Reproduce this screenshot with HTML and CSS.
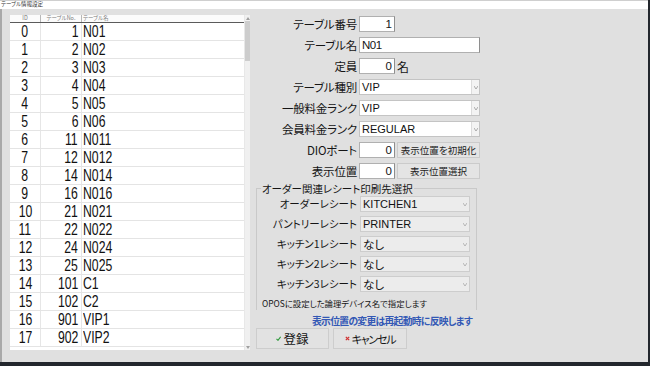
FILE: index.html
```html
<!DOCTYPE html>
<html lang="ja">
<head>
<meta charset="utf-8">
<link rel="stylesheet" href="styles.css">
</head>
<body>
<div class="window">
  <div class="titlebar">テーブル情報設定</div>
  <div class="main">
    <div class="grid">
      <div class="grid-body">
        <div class="row head"><div class="c id">ID</div><div class="c no">テーブルNo.</div><div class="c nm">テーブル名</div></div>
        <div class="row"><div class="c id"><span class="t">0</span></div><div class="c no"><span class="t">1</span></div><div class="c nm"><span class="t">N01</span></div></div>
        <div class="row"><div class="c id"><span class="t">1</span></div><div class="c no"><span class="t">2</span></div><div class="c nm"><span class="t">N02</span></div></div>
        <div class="row"><div class="c id"><span class="t">2</span></div><div class="c no"><span class="t">3</span></div><div class="c nm"><span class="t">N03</span></div></div>
        <div class="row"><div class="c id"><span class="t">3</span></div><div class="c no"><span class="t">4</span></div><div class="c nm"><span class="t">N04</span></div></div>
        <div class="row"><div class="c id"><span class="t">4</span></div><div class="c no"><span class="t">5</span></div><div class="c nm"><span class="t">N05</span></div></div>
        <div class="row"><div class="c id"><span class="t">5</span></div><div class="c no"><span class="t">6</span></div><div class="c nm"><span class="t">N06</span></div></div>
        <div class="row"><div class="c id"><span class="t">6</span></div><div class="c no"><span class="t">11</span></div><div class="c nm"><span class="t">N011</span></div></div>
        <div class="row"><div class="c id"><span class="t">7</span></div><div class="c no"><span class="t">12</span></div><div class="c nm"><span class="t">N012</span></div></div>
        <div class="row"><div class="c id"><span class="t">8</span></div><div class="c no"><span class="t">14</span></div><div class="c nm"><span class="t">N014</span></div></div>
        <div class="row"><div class="c id"><span class="t">9</span></div><div class="c no"><span class="t">16</span></div><div class="c nm"><span class="t">N016</span></div></div>
        <div class="row"><div class="c id"><span class="t">10</span></div><div class="c no"><span class="t">21</span></div><div class="c nm"><span class="t">N021</span></div></div>
        <div class="row"><div class="c id"><span class="t">11</span></div><div class="c no"><span class="t">22</span></div><div class="c nm"><span class="t">N022</span></div></div>
        <div class="row"><div class="c id"><span class="t">12</span></div><div class="c no"><span class="t">24</span></div><div class="c nm"><span class="t">N024</span></div></div>
        <div class="row"><div class="c id"><span class="t">13</span></div><div class="c no"><span class="t">25</span></div><div class="c nm"><span class="t">N025</span></div></div>
        <div class="row"><div class="c id"><span class="t">14</span></div><div class="c no"><span class="t">101</span></div><div class="c nm"><span class="t">C1</span></div></div>
        <div class="row"><div class="c id"><span class="t">15</span></div><div class="c no"><span class="t">102</span></div><div class="c nm"><span class="t">C2</span></div></div>
        <div class="row"><div class="c id"><span class="t">16</span></div><div class="c no"><span class="t">901</span></div><div class="c nm"><span class="t">VIP1</span></div></div>
        <div class="row"><div class="c id"><span class="t">17</span></div><div class="c no"><span class="t">902</span></div><div class="c nm"><span class="t">VIP2</span></div></div>
      </div>
      <div class="sb">
        <div class="sb-btn"><svg width="4" height="3" viewBox="0 0 4 3"><path d="M0 3 L2 0 L4 3Z" fill="#a0a0a0"/></svg></div>
        <div class="sb-thumb"></div>
        <div class="sb-track"></div>
        <div class="sb-btn"><svg width="4" height="3" viewBox="0 0 4 3"><path d="M0 0 L2 3 L4 0Z" fill="#a0a0a0"/></svg></div>
      </div>
    </div>

    <div class="form">
      <div class="frow"><div class="lbl">テーブル番号</div><div class="tb short">1</div></div>
      <div class="frow"><div class="lbl">テーブル名</div><div class="tb long cond">N01</div></div>
      <div class="frow"><div class="lbl">定員</div><div class="tb short">0</div><span class="unit">名</span></div>
      <div class="frow"><div class="lbl">テーブル種別</div><div class="sel"><span class="val">VIP</span><span class="arr"><svg width="4" height="3" viewBox="0 0 4 3"><path d="M0 0 L2 3 L4 0" fill="none" stroke="#999" stroke-width="0.8"/></svg></span></div></div>
      <div class="frow"><div class="lbl">一般料金ランク</div><div class="sel"><span class="val">VIP</span><span class="arr"><svg width="4" height="3" viewBox="0 0 4 3"><path d="M0 0 L2 3 L4 0" fill="none" stroke="#999" stroke-width="0.8"/></svg></span></div></div>
      <div class="frow"><div class="lbl">会員料金ランク</div><div class="sel"><span class="val">REGULAR</span><span class="arr"><svg width="4" height="3" viewBox="0 0 4 3"><path d="M0 0 L2 3 L4 0" fill="none" stroke="#999" stroke-width="0.8"/></svg></span></div></div>
      <div class="frow"><div class="lbl">DIOポート</div><div class="tb short">0</div><div class="sbtn">表示位置を初期化</div></div>
      <div class="frow"><div class="lbl">表示位置</div><div class="tb short">0</div><div class="sbtn">表示位置選択</div></div>

      <fieldset class="group">
        <legend>オーダー関連レシート印刷先選択</legend>
        <div class="grow"><div class="glbl">オーダーレシート</div><div class="gsel"><span class="val">KITCHEN1</span><span class="garr"><svg width="4" height="3" viewBox="0 0 4 3"><path d="M0 0 L2 3 L4 0" fill="none" stroke="#aaa" stroke-width="0.8"/></svg></span></div></div>
        <div class="grow"><div class="glbl">パントリーレシート</div><div class="gsel"><span class="val">PRINTER</span><span class="garr"><svg width="4" height="3" viewBox="0 0 4 3"><path d="M0 0 L2 3 L4 0" fill="none" stroke="#aaa" stroke-width="0.8"/></svg></span></div></div>
        <div class="grow"><div class="glbl">キッチン1レシート</div><div class="gsel"><span class="val jp">なし</span><span class="garr"><svg width="4" height="3" viewBox="0 0 4 3"><path d="M0 0 L2 3 L4 0" fill="none" stroke="#aaa" stroke-width="0.8"/></svg></span></div></div>
        <div class="grow"><div class="glbl">キッチン2レシート</div><div class="gsel"><span class="val jp">なし</span><span class="garr"><svg width="4" height="3" viewBox="0 0 4 3"><path d="M0 0 L2 3 L4 0" fill="none" stroke="#aaa" stroke-width="0.8"/></svg></span></div></div>
        <div class="grow"><div class="glbl">キッチン3レシート</div><div class="gsel"><span class="val jp">なし</span><span class="garr"><svg width="4" height="3" viewBox="0 0 4 3"><path d="M0 0 L2 3 L4 0" fill="none" stroke="#aaa" stroke-width="0.8"/></svg></span></div></div>
        <div class="note">OPOSに設定した論理デバイス名で指定します</div>
      </fieldset>

      <div class="info">表示位置の変更は再起動時に反映します</div>

      <div class="actions">
        <div class="bbtn ok"><svg width="5" height="5" viewBox="0 0 5 5"><path d="M0.5 2.8 L2 4.3 L4.6 0.8" fill="none" stroke="#2e9a3a" stroke-width="1.1"/></svg><span>登録</span></div>
        <div class="bbtn cancel"><svg width="5" height="5" viewBox="0 0 5 5"><path d="M0.8 0.8 L4.2 4.2 M4.2 0.8 L0.8 4.2" fill="none" stroke="#d03030" stroke-width="1.2"/></svg><span>キャンセル</span></div>
      </div>
    </div>
  </div>
</div>
</body>
</html>
```

FILE: styles.css
```css
* { box-sizing: border-box; }

body {
  margin: 0;
  width: 650px;
  height: 366px;
  overflow: hidden;
  background: #23272d;
  font-family: "Noto Sans CJK JP", "Noto Sans", sans-serif;
  font-feature-settings: "palt";
  color: #151515;
}

.window {
  width: 648px;
  height: 362px;
  background: #e0e0e0;
  display: flex;
  flex-direction: column;
}

.titlebar {
  height: 9px;
  background: #ffffff;
  border-top: 1px solid #cfcfcf;
  font-size: 5.5px;
  line-height: 7px;
  padding-left: 1px;
  color: #333;
}

.main {
  flex: 1;
  display: flex;
  border-left: 2px solid #a9a9a9;
  padding: 6px 0 0 8px;
}

/* ---------- grid ---------- */
.grid {
  display: flex;
  width: 240px;
  height: 335px;
  background: #ffffff;
}

.grid-body {
  width: 234px;
}

.row {
  display: grid;
  grid-template-columns: 31px 41px 162px;
  height: 18px;
  border-bottom: 1px solid #e4e4e4;
}

.row.head {
  height: 8px;
  border-bottom: 1px solid #5a5a5a;
  background: #fbfbfb;
}

.c {
  display: flex;
  align-items: center;
  overflow: hidden;
  border-right: 1px solid #e6e6e6;
  white-space: nowrap;
}

.head .c {
  font-size: 5.5px;
  line-height: 7px;
  color: #7a7a7a;
  border-right: 1px solid #b8b8b8;
}

.c.id { justify-content: center; }
.c.no { justify-content: flex-end; padding-right: 3px; }
.c.nm { justify-content: flex-start; padding-left: 1px; border-right: none; }
.head .c.no { justify-content: center; padding-right: 0; }
.head .c.nm { border-right: none; }

.t {
  display: inline-block;
  font-family: "Liberation Sans", Arial, sans-serif;
  font-size: 17px;
  line-height: 17px;
  color: #111;
  transform: scaleX(0.72);
}
.id .t { transform-origin: center; }
.no .t { transform-origin: right center; }
.nm .t { transform-origin: left center; }

.sb {
  width: 6px;
  background: #f0f0f0;
  display: flex;
  flex-direction: column;
  border-left: 1px solid #e8e8e8;
}
.sb-btn {
  height: 6px;
  display: flex;
  align-items: center;
  justify-content: center;
}
.sb-thumb {
  height: 40px;
  background: #cdcdcd;
}
.sb-track { flex: 1; }

/* ---------- form ---------- */
.form {
  margin-left: 6px;
  width: 226px;
  padding-top: 1px;
  display: flex;
  flex-direction: column;
}

.frow {
  display: flex;
  align-items: center;
  height: 16px;
  margin-bottom: 5px;
}

.lbl {
  width: 101px;
  margin-right: 2px;
  text-align: right;
  font-size: 11.5px;
  letter-spacing: -0.2px;
  line-height: 16px;
  white-space: nowrap;
  color: #151515;
}

.tb {
  height: 16px;
  background: #ffffff;
  border: 1px solid #b0b0b0;
  border-right-color: #8e8e8e;
  display: flex;
  align-items: center;
  font-family: "Liberation Sans", Arial, sans-serif;
  font-size: 11.5px;
  padding: 0 2px;
}
.tb.short { width: 36px; justify-content: flex-end; }
.tb.long { width: 121px; }
.tb.cond { letter-spacing: -0.5px; }

.unit {
  font-size: 12px;
  margin-left: 2px;
}

.sel {
  width: 121px;
  height: 16px;
  display: flex;
  background: #ffffff;
  border: 1px solid #c4c4c4;
}
.val {
  flex: 1;
  display: flex;
  align-items: center;
  padding-left: 2px;
  font-family: "Liberation Sans", Arial, sans-serif;
  font-size: 11px;
  color: #111;
}
.val.jp {
  font-family: "Noto Sans CJK JP", sans-serif;
  font-size: 11.5px;
}
.arr {
  width: 8px;
  display: flex;
  align-items: center;
  justify-content: center;
  background: #f3f3f3;
  border-left: 1px solid #dcdcdc;
}

.sbtn {
  width: 83px;
  height: 16px;
  margin-left: 2px;
  background: #e4e4e4;
  border: 1px solid #cbcbcb;
  font-size: 9.5px;
  line-height: 14px;
  text-align: center;
  white-space: nowrap;
  color: #222;
}

/* ---------- group ---------- */
.group {
  width: 221px;
  margin: -1px 0 0 0;
  padding: 2px 6px 0 0;
  border: 1px solid #c9c9c9;
  border-bottom: none;
  min-width: 0;
}
.group legend {
  margin-left: 4px;
  padding: 0 1px;
  font-size: 10.5px;
  line-height: 11px;
  color: #151515;
}

.grow {
  display: flex;
  align-items: center;
  height: 16px;
  margin-bottom: 4px;
}
.glbl {
  width: 100px;
  margin-right: 3px;
  text-align: right;
  font-size: 10.5px;
  line-height: 16px;
  white-space: nowrap;
  color: #151515;
}
.gsel {
  width: 110px;
  height: 16px;
  display: flex;
  background: #ececec;
  border: 1px solid #cdcdcd;
}
.garr {
  width: 8px;
  display: flex;
  align-items: center;
  justify-content: center;
}

.note {
  margin-top: 2px;
  padding-left: 5px;
  font-size: 8.4px;
  line-height: 14px;
  white-space: nowrap;
  color: #151515;
}

.info {
  margin-top: 6px;
  padding-right: 10px;
  text-align: right;
  font-size: 9.8px;
  letter-spacing: -0.7px;
  line-height: 11px;
  font-weight: bold;
  color: #3358b5;
  white-space: nowrap;
}

.actions {
  display: flex;
  gap: 4px;
  margin-top: 1px;
}
.bbtn {
  height: 21px;
  display: flex;
  align-items: center;
  justify-content: center;
  gap: 2px;
  background: #e2e2e2;
  border: 1px solid #cdcdcd;
  font-size: 12.5px;
  color: #151515;
}
.bbtn.ok { width: 73px; }
.bbtn.cancel { width: 74px; }
.bbtn.cancel span { font-size: 11px; letter-spacing: -1.2px; }
```
